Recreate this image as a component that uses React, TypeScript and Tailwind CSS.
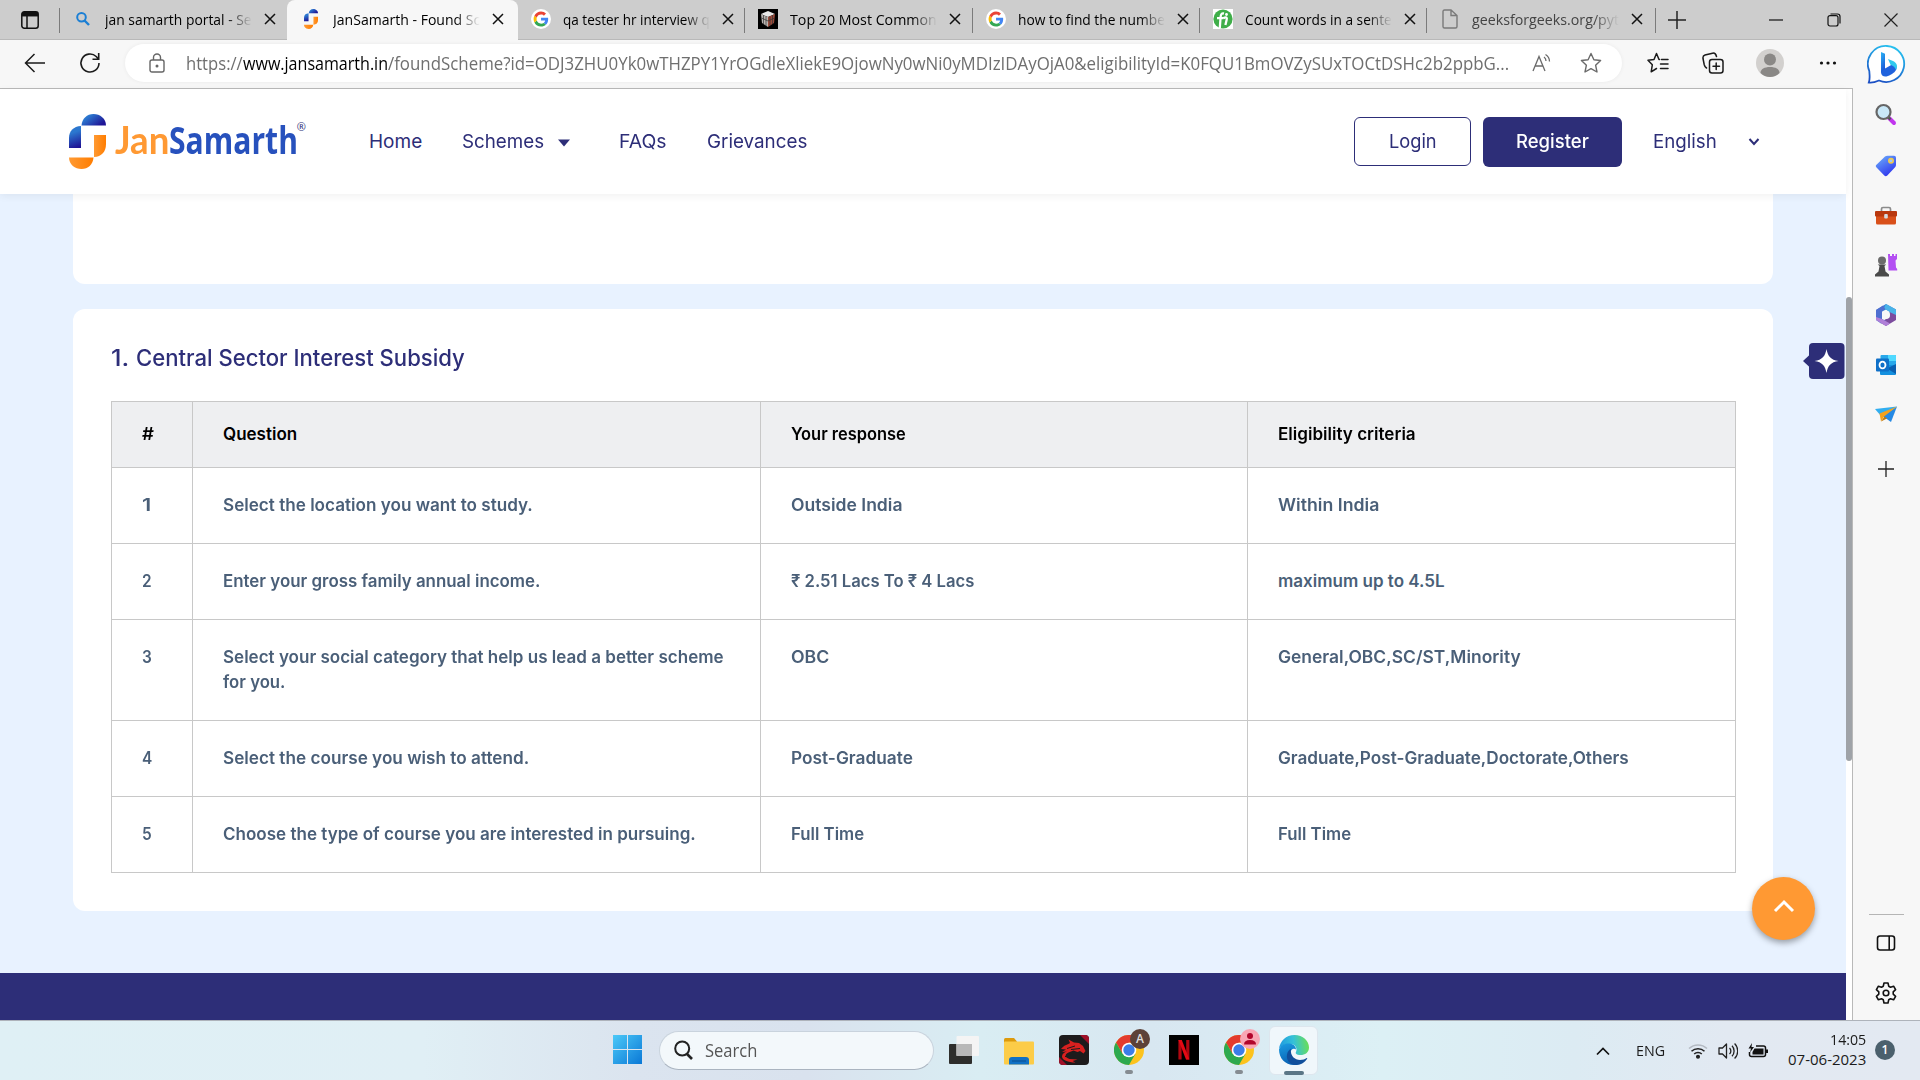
import React, { useLayoutEffect, useRef, useState } from "react";

/** Single line of text set to a given width. */
function Fit({ w, children, className = "" }: { w: number; children: React.ReactNode; className?: string }) {
  const ref = useRef<HTMLSpanElement>(null);
  const [scale, setScale] = useState(1);
  useLayoutEffect(() => {
    if (ref.current) setScale(w / ref.current.offsetWidth);
  }, [w]);
  return (
    <span className="block shrink-0 whitespace-nowrap" style={{ width: w }}>
      <span ref={ref} className={`inline-block origin-left whitespace-pre align-top ${className}`} style={{ transform: `scaleX(${scale})` }}>
        {children}
      </span>
    </span>
  );
}

function GoogleG() {
  return (
    <svg viewBox="0 0 20 20" className="h-5 w-5">
      <circle cx="10" cy="10" r="10" fill="#fff" />
      <g transform="translate(2.6 2.6) scale(0.62)">
        <path fill="#4285F4" d="M23.5 12.3c0-.9-.1-1.5-.2-2.2H12v4.3h6.6c-.1 1.1-.8 2.8-2.4 3.9l3.7 2.9c2.2-2.1 3.6-5.100 3.600-8.900z" />
        <path fill="#34A853" d="M12 24c3.200 0 6-1.100 7.900-2.900l-3.700-2.900c-1 .7-2.400 1.200-4.200 1.200-3.200 0-5.900-2.100-6.800-5l-3.900 3C3.200 21.300 7.300 24 12 24z" />
        <path fill="#FBBC05" d="M5.200 14.400c-.2-.8-.4-1.600-.4-2.400s.1-1.700.4-2.400l-3.900-3C.5 8.200 0 10 0 12s.5 3.800 1.300 5.400z" />
        <path fill="#EA4335" d="M12 4.700c2.200 0 3.700 1 4.600 1.800L20 3.200C17.900 1.200 15.200 0 12 0 7.300 0 3.200 2.700 1.300 6.600l3.900 3c1-2.900 3.600-4.900 6.800-4.900z" />
      </g>
    </svg>
  );
}

function JanMark({ className }: { className: string }) {
  return (
    <svg viewBox="0 0 37 55" className={className} preserveAspectRatio="none">
      <defs>
        <linearGradient id="jb1" x1="0" y1="0" x2="1" y2="0.6"><stop offset="0.3" stopColor="#2b77cf" /><stop offset="1" stopColor="#1f1596" /></linearGradient>
        <linearGradient id="jb2" x1="0.3" y1="0" x2="0.5" y2="1"><stop offset="0.3" stopColor="#2b77cf" /><stop offset="1" stopColor="#1f1596" /></linearGradient>
        <linearGradient id="jo1" x1="0" y1="0" x2="1" y2="0"><stop offset="0" stopColor="#ff9a33" /><stop offset="1" stopColor="#ff7d00" /></linearGradient>
      </defs>
      <path d="M12.500 11.500C13 4.500 18 0 24.500 0S37 4.500 37 11.500z" fill="url(#jb1)" />
      <path d="M12 12v22H0V24C0 17 4.500 12.500 12 12z" fill="url(#jb2)" />
      <path d="M25 21h12v9c0 8-4.500 12.500-12 13z" fill="url(#jo1)" />
      <path d="M0 43.500h24.500C24 50.500 19 55 12.500 55S0 50.500 0 43.500z" fill="url(#jo1)" />
    </svg>
  );
}

function SearchBlue() {
  return (
    <svg viewBox="0 0 20 20" className="h-5 w-5" fill="none" stroke="#1b7fd4" strokeWidth="2">
      <circle cx="8.500" cy="8.300" r="4.300" />
      <path d="M11.500 11.500l4.500 4.500" strokeWidth="2.400" />
    </svg>
  );
}

function CubeIcon() {
  return (
    <svg viewBox="0 0 20 20" className="h-5 w-5">
      <rect width="20" height="20" fill="#000" />
      <path d="M3 5l7-3 7 3-7 3z" fill="#e8e8e8" />
      <path d="M3 5l7 3v10l-6-4z" fill="#b9b4b0" />
      <path d="M17 5l-7 3v10l6-4z" fill="#9a4a3a" />
      <path d="M5.500 6v9M8 7v10M12 7.500v9M14.500 6v9M3.500 9l6.500 3 6.500-3" stroke="#333" strokeWidth="0.700" fill="none" />
    </svg>
  );
}

function GreenF() {
  return (
    <svg viewBox="0 0 20 20" className="h-5 w-5">
      <rect width="20" height="20" fill="#fff" />
      <circle cx="10" cy="10" r="9.600" fill="#3fae49" />
      <path d="M11 4.500C8.500 4 7.800 5.500 7.600 8L6.800 19M4 9.200h6.500M10.500 9.200C13 7.500 14.500 8.500 13.600 11l-1.200 5" stroke="#fff" strokeWidth="2.300" fill="none" />
      <circle cx="13.500" cy="5.500" r="1.400" fill="#fff" />
    </svg>
  );
}

function FileIcon() {
  return (
    <svg viewBox="0 0 20 20" className="h-5 w-5" fill="none" stroke="#7a7a7a" strokeWidth="1.400">
      <path d="M3 2.500Q3 1 4.500 1H11l6 5.500V17.500Q17 19 15.500 19h-11Q3 19 3 17.500zM11 1v5.500h6" />
    </svg>
  );
}

const tabs = [
  { t: "jan samarth portal - Se", icon: <SearchBlue /> },
  { t: "JanSamarth - Found Sc", icon: <JanMark className="ml-[3px] h-5 w-[14px]" />, active: true },
  { t: "qa tester hr interview q", icon: <GoogleG /> },
  { t: "Top 20 Most Common", icon: <CubeIcon /> },
  { t: "how to find the numbe", icon: <GoogleG /> },
  { t: "Count words in a sente", icon: <GreenF /> },
  { t: "geeksforgeeks.org/pyt", icon: <FileIcon />, dim: true },
];

function TabBar() {
  return (
    <div className="flex h-10 shrink-0 items-stretch border-b border-[#b9b9b9] bg-[#cdcdcd]">
      <div className="flex w-[60px] items-center justify-center">
        <svg viewBox="0 0 20 20" className="h-5 w-5" fill="none" stroke="#111" strokeWidth="1.500">
          <rect x="1.800" y="1.800" width="16.400" height="16.400" rx="2.500" />
          <path d="M2 4.200h16" strokeWidth="4.500" />
          <path d="M7 6v12" />
        </svg>
      </div>
      {tabs.map((tab, i) => (
        <div
          key={i}
          className={
            tab.active
              ? "relative z-10 -mb-px flex w-[230.500px] items-center rounded-t-lg bg-[#f7f7f7] pb-[2px] pl-[14px]"
              : "relative flex w-[227.400px] items-center pb-px pl-[13px]"
          }
        >
          {i !== 1 && i !== 2 && <span className="absolute -left-px top-2 h-[25px] w-px bg-[#7b7b7b]" />}
          <span className="flex h-5 w-5 shrink-0">{tab.icon}</span>
          <div className={`ml-3 font-['Open_Sans'] text-[15px] leading-5 [mask-image:linear-gradient(to_right,black_83%,transparent_100%)] ${tab.dim ? "text-[#444]" : "text-black"}`}>
            <Fit w={147}>{tab.t}</Fit>
          </div>
          <svg viewBox="0 0 12 12" className="ml-3 h-3 w-3 shrink-0" stroke="#111" strokeWidth="1.500"><path d="M1 1l10 10M11 1L1 11" /></svg>
        </div>
      ))}
      <div className="relative flex w-[44px] items-center justify-center">
        <span className="absolute left-0 top-2 h-[25px] w-px bg-[#7b7b7b]" />
        <svg viewBox="0 0 18 18" className="h-[18px] w-[18px]" stroke="#222" strokeWidth="1.500"><path d="M9 0v18M0 9h18" /></svg>
      </div>
      <div className="ml-auto flex w-[151px] items-center justify-between pr-[22px]">
        <svg viewBox="0 0 14 14" className="h-[14px] w-[14px]" stroke="#111" strokeWidth="1.200"><path d="M0 7h14" /></svg>
        <svg viewBox="0 0 14 14" className="h-[14px] w-[14px]" fill="none" stroke="#111" strokeWidth="1.200">
          <rect x="1" y="2.600" width="10" height="10.400" rx="2" /><path d="M3.500 1h7Q13 1 13 3.500v7" />
        </svg>
        <svg viewBox="0 0 14 14" className="h-[14px] w-[14px]" stroke="#222" strokeWidth="1.200"><path d="M.5.500l13 13M13.500.500l-13 13" /></svg>
      </div>
    </div>
  );
}

function Toolbar() {
  return (
    <div className="flex h-[49px] shrink-0 items-center border-b border-[#b9b9b9] bg-[#f7f7f7] pb-[2px]">
      <svg viewBox="0 0 22 20" className="ml-6 h-5 w-[22px]" fill="none" stroke="#1b1b1b" strokeWidth="1.500"><path d="M21 10H1.500M10.500 1L1.500 10l9 9" /></svg>
      <svg viewBox="0 0 22 22" className="ml-[33px] h-[22px] w-[22px]" fill="none" stroke="#1b1b1b" strokeWidth="1.600">
        <path d="M20 11a9 9 0 1 1-2.800-6.500L19.500 7M19.700 1v6.200h-6.200" />
      </svg>
      <div className="ml-[24px] flex h-[38px] w-[1497px] items-center rounded-full bg-white pl-[24px] shadow-[0_0_4px_rgba(0,0,0,0.06)]">
        <svg viewBox="0 0 16 20" className="h-5 w-4" fill="none" stroke="#666" strokeWidth="1.400">
          <rect x="1" y="7" width="14" height="12" rx="2" /><path d="M4.500 7V4.500a3.500 3.500 0 0 1 7 0V7" /><circle cx="8" cy="13" r="0.800" fill="#666" />
        </svg>
        <div className="ml-[21px] flex font-['Open_Sans'] text-[17.500px] leading-6 text-[#6f6f6f]">
          <Fit w={57}>https://</Fit>
          <Fit w={145} className="text-black">www.jansamarth.in</Fit>
          <Fit w={1121.500}>/foundScheme?id=ODJ3ZHU0Yk0wTHZPY1YrOGdleXliekE9OjowNy0wNi0yMDIzIDAyOjA0&amp;eligibilityId=K0FQU1BmOVZySUxTOCtDSHc2b2ppbG...</Fit>
        </div>
        <svg viewBox="0 0 20 20" className="ml-[22px] h-5 w-5" fill="none" stroke="#6a6a6a" strokeWidth="1.300">
          <path d="M1 18L7 3.500 13 18M3 13h8M12 4c1.500 1 2 2.500 2 4M13.500 1.500c2.500 1.500 4 4 4 7" />
        </svg>
        <svg viewBox="0 0 22 22" className="ml-[28px] h-[22px] w-[22px]" fill="none" stroke="#6a6a6a" strokeWidth="1.400" strokeLinejoin="round">
          <path d="M11 1.500l2.900 6.200 6.700.8-5 4.700 1.400 6.800-6-3.400-6 3.400 1.400-6.800-5-4.700 6.700-.8z" />
        </svg>
      </div>
      <svg viewBox="0 0 22 22" className="ml-[25px] h-[22px] w-[22px]" fill="none" stroke="#1b1b1b" strokeWidth="1.500" strokeLinejoin="round" strokeLinecap="round">
        <path d="M12.500 7.500h-.5L9.500 1.500 7 7.500l-6 .8 4.300 4.500-1.100 7 5.300-3.300M14.500 7.500H21M13.500 12H21M13.500 16.500H21" />
      </svg>
      <svg viewBox="0 0 22 22" className="ml-[33px] h-[22px] w-[22px]" fill="none" stroke="#1b1b1b" strokeWidth="1.500" strokeLinecap="round">
        <rect x="7.500" y="7.500" width="13.500" height="13.500" rx="2.500" /><path d="M14.200 11v6.500M11 14.200h6.500M4.500 16C2.800 15 2.600 14 2.200 12.500L1 6.500C.7 4.500 1.200 3.500 3 3L10.500 1.200C12.500.8 13.800 1.500 14.500 4.500" />
      </svg>
      <svg viewBox="0 0 28 28" className="ml-[32px] h-7 w-7">
        <circle cx="14" cy="14" r="14" fill="#d2d0ce" /><circle cx="14" cy="10.500" r="6" fill="#8a8886" /><path d="M4.500 24c0-4 4-6 9.500-6s9.500 2 9.500 6A14 14 0 0 1 14 28 14 14 0 0 1 4.500 24z" fill="#8a8886" />
      </svg>
      <svg viewBox="0 0 18 6" className="ml-[35px] h-[6px] w-[18px]" fill="#111"><circle cx="2.500" cy="3" r="1.600" /><circle cx="9" cy="3" r="1.600" /><circle cx="15.500" cy="3" r="1.600" /></svg>
    </div>
  );
}

function SiteHeader() {
  return (
    <header className="relative z-10 flex h-[105px] items-center bg-white pl-[69px] font-['Inter'] text-[19px] text-[#2d2e78] shadow-[0_2px_8px_rgba(0,0,0,0.06)]">
      <JanMark className="h-[55px] w-[37px]" />
      <div className="relative ml-[9px] flex h-[52px] items-center pb-[5px] font-['Open_Sans'] text-[38px] font-bold leading-none">
        <Fit w={54} className="font-['Lato'] text-[#ff9933]">Jan</Fit>
        <Fit w={129} className="text-[#2751bd]">Samarth</Fit>
        <span className="absolute -right-[8px] top-[5px] text-[11px] font-normal text-[#2d2e78]">®</span>
      </div>
      <nav className="ml-[71px] flex items-center pt-[2px]">
        <Fit w={53}>Home</Fit>
        <span className="w-10" />
        <Fit w={82}>Schemes</Fit>
        <svg viewBox="0 0 12 8" className="ml-[14px] mt-px h-2 w-3" fill="#2d2e78"><path d="M0 .5h12L6 7.500z" /></svg>
        <span className="w-[49px]" />
        <Fit w={48}>FAQs</Fit>
        <span className="w-10" />
        <Fit w={100}>Grievances</Fit>
      </nav>
      <div className="ml-auto flex items-center">
        <div className="flex h-[49px] w-[117px] items-center justify-center rounded-md border border-[#2d2e78] pt-[2px]"><Fit w={48}>Login</Fit></div>
        <div className="ml-3 flex h-[50px] w-[139px] items-center justify-center rounded-md bg-[#2d2e78] pt-[2px] font-medium text-white"><Fit w={73}>Register</Fit></div>
        <div className="ml-[31px] pt-[2px]"><Fit w={64}>English</Fit></div>
        <svg viewBox="0 0 12 12" className="ml-[31px] mr-[86px] h-3 w-3" fill="none" stroke="#2d2e78" strokeWidth="2"><path d="M1.500 3L6 8l4.500-5" /></svg>
      </div>
    </header>
  );
}

type Cell = [string, number];
const head: Cell[] = [["#", 12], ["Question", 74], ["Your response", 115], ["Eligibility criteria", 137.5]];
const rows: { n: Cell; q: Cell[]; r: Cell; e: Cell }[] = [
  { n: ["1", 9], q: [["Select the location you want to study.", 310]], r: ["Outside India", 111.5], e: ["Within India", 101] },
  { n: ["2", 10], q: [["Enter your gross family annual income.", 317]], r: ["₹ 2.51 Lacs To ₹ 4 Lacs", 183], e: ["maximum up to 4.5L", 167] },
  { n: ["3", 10], q: [["Select your social category that help us lead a better scheme", 501], ["for you.", 62]], r: ["OBC", 38.5], e: ["General,OBC,SC/ST,Minority", 243] },
  { n: ["4", 10], q: [["Select the course you wish to attend.", 306]], r: ["Post-Graduate", 122], e: ["Graduate,Post-Graduate,Doctorate,Others", 351] },
  { n: ["5", 10], q: [["Choose the type of course you are interested in pursuing.", 473]], r: ["Full Time", 73], e: ["Full Time", 73] },
];

function EligibilityTable() {
  const cell = "border border-[#c8c8c8] pl-[30px] align-top";
  return (
    <table className="mt-[29px] w-[1625px] table-fixed border-collapse font-['Inter'] text-[17px] font-[560] leading-[25px] text-[#4a5f78]">
      <colgroup>
        <col className="w-[81px]" /><col className="w-[568px]" /><col className="w-[487px]" /><col />
      </colgroup>
      <thead>
        <tr className="h-[66px] bg-[#eeeff1] text-black">
          {head.map(([t, w]) => (
            <th key={t} className={`${cell} pt-5 text-left font-[560]`}><Fit w={w}>{t}</Fit></th>
          ))}
        </tr>
      </thead>
      <tbody>
        {rows.map((row) => (
          <tr key={row.n[0]} className={row.q.length > 1 ? "h-[101px]" : "h-[76px]"}>
            <td className={`${cell} pt-[25px]`}><Fit w={row.n[1]}>{row.n[0]}</Fit></td>
            <td className={`${cell} pt-[25px]`}>{row.q.map(([t, w]) => <Fit key={t} w={w}>{t}</Fit>)}</td>
            <td className={`${cell} pt-[25px]`}><Fit w={row.r[1]}>{row.r[0]}</Fit></td>
            <td className={`${cell} pt-[25px]`}><Fit w={row.e[1]}>{row.e[0]}</Fit></td>
          </tr>
        ))}
      </tbody>
    </table>
  );
}

function Page() {
  return (
    <div className="flex min-h-0 flex-1 border-r border-[#b9b9b9] bg-white">
      <div className="relative flex w-[1846px] flex-col bg-[#e8f2ff]">
        <SiteHeader />
        <main className="flex flex-col pl-[73px]">
          <section className="h-[90px] w-[1700px] rounded-b-xl bg-white" />
          <section className="mt-[25px] h-[602px] w-[1700px] rounded-xl bg-white pl-[38px] pt-[35px]">
            <h2 className="flex gap-[7px] font-['Inter'] text-[22.500px] font-medium leading-7 text-[#2d2e78]">
              <Fit w={18}>1.</Fit>
              <Fit w={329}>Central Sector Interest Subsidy</Fit>
            </h2>
            <EligibilityTable />
          </section>
        </main>
        <footer className="mt-auto h-[47px] bg-[#2d2e78]" />
        <svg viewBox="0 0 42 36" className="absolute left-[1803px] top-[254px] h-9 w-[42px]">
          <rect x="6" y="0" width="35.500" height="36" rx="4" fill="#2d2e78" /><path d="M0 18l7-6.500v13z" fill="#2d2e78" />
          <path d="M23.500 6c1.300 7.500 4.200 10.700 12 12-7.800 1.300-10.700 4.500-12 12-1.300-7.500-4.200-10.700-12-12 7.800-1.300 10.700-4.500 12-12z" fill="#fff" />
        </svg>
        <button className="absolute left-[1752px] top-[788px] flex h-[63px] w-[63px] items-center justify-center rounded-full bg-[#ff9933] shadow-[0_3px_6px_rgba(0,0,0,0.35)]">
          <svg viewBox="0 0 22 14" className="mb-[6px] h-[14px] w-[22px]" fill="none" stroke="#fff" strokeWidth="3"><path d="M2 12l9-9 9 9" /></svg>
        </button>
      </div>
      <div className="w-[6px] bg-white pt-[208px]"><div className="h-[464px] rounded-full bg-[#9fa3a8]" /></div>
    </div>
  );
}

function Sidebar() {
  return (
    <aside className="flex w-[67px] shrink-0 flex-col items-center bg-[#f7f7f7] pr-px pt-[4px]">
      <svg viewBox="0 0 40 40" className="ml-[2px] h-10 w-10">
        <defs>
          <linearGradient id="bo" x1="0.700" y1="0" x2="0.300" y2="1"><stop offset="0" stopColor="#28c3f0" /><stop offset="1" stopColor="#1b4fc4" /></linearGradient>
          <linearGradient id="bb" x1="0" y1="0" x2="0.300" y2="1"><stop offset="0" stopColor="#2ab5f5" /><stop offset="1" stopColor="#1a55d8" /></linearGradient>
        </defs>
        <path d="M20 2a18 18 0 1 1-8 34.500C8.500 38 5 39 1.800 38.500 3.300 35 2.500 31 2.300 27A18 18 0 0 1 20 2z" fill="#fff" stroke="url(#bo)" strokeWidth="1.800" />
        <path d="M14 8l4 1.800v16L14 29z" fill="url(#bb)" /><path d="M14 28l4-3.500 8-4.500c3.500 1 4 3 3 6-1.500 3-6 5.500-9.500 6.500-3 .5-5.500-1-5.500-4.500z" fill="#1f62dd" /><path d="M21 15l5 2c4 1.700 5 5.500 3 9-1-3-2.500-4-5.500-5.300z" fill="#30c8ee" />
      </svg>
      <svg viewBox="0 0 24 24" className="mt-[19px] h-6 w-6">
        <path d="M15 15l5 5" stroke="#c135ee" strokeWidth="4" strokeLinecap="round" /><path d="M14 14l2.500 2.500" stroke="#555" strokeWidth="2.500" /><circle cx="9.500" cy="9" r="7" fill="#c9e8f8" stroke="#666" strokeWidth="2.200" />
      </svg>
      <svg viewBox="0 0 24 24" className="mt-[27px] h-6 w-6">
        <defs><linearGradient id="tg" x1="0" y1="0" x2="0.600" y2="1"><stop offset="0" stopColor="#6fb4fb" /><stop offset="1" stopColor="#3038ee" /></linearGradient></defs>
        <path d="M2.200 11L11 2.500Q12 1.800 13.500 1.800H20Q22 1.800 22 3.800v7Q22 12 21.300 13l-8 8.500q-1.600 1.400-3 0l-8-8.200q-1.200-1.200-.1-2.300z" fill="url(#tg)" /><circle cx="17" cy="6.800" r="2.200" fill="#9cc8ff" stroke="#f2c94a" strokeWidth="1.600" />
      </svg>
      <svg viewBox="0 0 24 24" className="mt-[26px] h-6 w-6">
        <path d="M7.500 7V5Q7.500 3.500 9 3.500h6Q16.500 3.500 16.500 5v2" fill="none" stroke="#8b8b8b" strokeWidth="1.700" /><rect x="2" y="10" width="20" height="10.500" rx="1.500" fill="#d9501a" /><rect x="1" y="7" width="22" height="5.500" rx="1" fill="#b9380e" /><rect x="10.200" y="10" width="3.600" height="4.500" rx="1" fill="#d5dbe0" />
      </svg>
      <svg viewBox="0 0 24 24" className="mt-[25px] h-6 w-6">
        <path d="M14 1h2v2h2V1h2v2h1.500V1H23v5l-1.500 1.500.5 7 1.200 1.500v1.500H14.500z" fill="#b34ff2" /><circle cx="8" cy="7.500" r="4" fill="#6b6b6b" /><path d="M3.800 11.500h8.400L10.500 13l1 5.500 3.500 3V23.500H1v-2l3.500-3 1-5.500z" fill="#4a4a4a" />
      </svg>
      <svg viewBox="0 0 24 24" className="mt-[26px] h-6 w-6">
        <path d="M12 1l10 5.500v6l-6.500-4L12 6.500 8 8.500v7.500L2 16V7z" fill="#3a7fd5" /><path d="M12 1l10 5.500V15l-6.500-1V9L10 5z" fill="#49b3e8" /><path d="M22 12v5l-10 6-6-3.500 9.500-5.500V9z" fill="#7c4c9e" /><path d="M2 7l7-4.500 2 3-3 3V16l4 2-5 2.500-5-3.500z" fill="#4f6fd0" /><path d="M2 14v3l10 6 4-2.500-8-4.500z" fill="#b07fd8" /><circle cx="12" cy="12" r="4" fill="#f7f7f7" />
      </svg>
      <svg viewBox="0 0 24 24" className="mt-[26px] h-6 w-6">
        <rect x="6.500" y="2" width="15.500" height="13" rx="1" fill="#28a8ea" /><path d="M14 2h7q1 0 1 1v5h-8z" fill="#50d9ff" /><path d="M6 12h16v9q0 1-1 1H7q-1 0-1-1z" fill="#1490df" /><path d="M22 11v10l-9-5.500z" fill="#0a5fb0" /><rect x="2" y="5.500" width="13" height="13" rx="1" fill="#0f70c8" /><ellipse cx="8.500" cy="12" rx="3" ry="3.400" fill="none" stroke="#fff" strokeWidth="1.800" />
      </svg>
      <svg viewBox="0 0 24 24" className="mt-[26px] h-6 w-6">
        <path d="M1 6l22-2.500L7 13z" fill="#31aef0" /><path d="M23 3.500L17 19l-8.500-6z" fill="#2589e4" /><path d="M23 3.500L5.500 10.500 7 18.500l3-5z" fill="#f5a11c" /><path d="M7 18.500l3.500-5 2.500 2z" fill="#c07a10" />
      </svg>
      <svg viewBox="0 0 16 16" className="mt-[34px] h-4 w-4" stroke="#222" strokeWidth="1.300"><path d="M8 0v16M0 8h16" /></svg>
      <div className="mt-auto h-px w-[35px] bg-[#b5b5b5]" />
      <svg viewBox="0 0 20 20" className="mt-[18px] h-5 w-5" fill="none" stroke="#111" strokeWidth="1.600"><rect x="1.500" y="3" width="17" height="14" rx="2.500" /><path d="M13.200 3v14" /></svg>
      <svg viewBox="0 0 24 24" className="mb-[15px] mt-[28px] h-6 w-6" fill="none" stroke="#111" strokeWidth="1.600" strokeLinejoin="round">
        <path d="M10 2h4l.7 3.200 1.800 1 3.100-1 2 3.500-2.400 2.200v2.200l2.400 2.200-2 3.500-3.100-1-1.800 1L14 22h-4l-.7-3.200-1.800-1-3.100 1-2-3.500 2.400-2.200v-2.200L2.400 8.700l2-3.500 3.100 1 1.800-1z" /><circle cx="12" cy="12" r="2.800" />
      </svg>
    </aside>
  );
}

function Chrome() {
  return (
    <svg viewBox="0 0 30 30" className="h-[30px] w-[30px]">
      <circle cx="15" cy="15" r="15" fill="#fcc31e" />
      <path d="M2 7.500A15 15 0 0 1 28 7.500H15L8.500 18.700z" fill="#e33b2e" />
      <path d="M2 7.500A15 15 0 0 0 15 30l6.500-11.200L8.500 18.700z" fill="#2da94f" />
      <circle cx="15" cy="15" r="7.300" fill="#fff" /><circle cx="15" cy="15" r="5.700" fill="#3b7de9" />
    </svg>
  );
}

function Taskbar() {
  return (
    <div className="flex h-[60px] shrink-0 items-center border-t border-[#aeb3bb] bg-[linear-gradient(90deg,#dff0f5_0%,#e0eff5_22%,#dbe4ef_33%,#d9e2ee_42%,#d9edf3_51%,#d8e7f1_60%,#dcf0f5_72%,#dcebf3_82%,#e2e9f2_90%,#e3e9f2_100%)] pl-[612.500px] font-['Open_Sans'] text-[#1b1b1b]">
      <svg viewBox="0 0 30 30" className="-mt-px h-[30px] w-[30px]">
        <defs><linearGradient id="wn" x1="0" y1="0" x2="1" y2="1"><stop offset="0" stopColor="#4cc9f8" /><stop offset="1" stopColor="#0a78d6" /></linearGradient></defs>
        <path d="M0 0h14v14H0zM15 0H29v14H15zM0 15h14v14H0zM15 15H29v14H15z" fill="url(#wn)" />
      </svg>
      <div className="-mt-px ml-[16.500px] flex h-[39px] w-[275px] items-center rounded-full border border-[#c9d3dd] border-b-[#aab4c0] bg-[#f3f8fb] pl-[13px] text-[17.500px] text-[#555]">
        <svg viewBox="0 0 20 20" className="h-5 w-5" fill="none" stroke="#222" strokeWidth="2"><circle cx="9.200" cy="8.500" r="7" /><path d="M14 14l5 5" strokeWidth="2.600" /></svg>
        <span className="w-3" />
        <Fit w={52}>Search</Fit>
      </div>
      <svg viewBox="0 0 30 30" className="-mt-px ml-[15px] h-[30px] w-[30px]"><rect x="0" y="9" width="23" height="20" rx="1" fill="#2e2e2c" /><rect x="7.500" y="1" width="22.500" height="20" rx="1" fill="#f4f4f4" /><path d="M7.500 9H23v12H7.500z" fill="#b8b8b8" /></svg>
      <svg viewBox="0 0 30 30" className="ml-[25px] h-[30px] w-[30px]"><path d="M0 3.500Q0 2 1.500 2H10l3 3.500H13V9H0z" fill="#dd9a0c" /><rect y="5.500" width="30" height="23" rx="1" fill="#fccc48" /><path d="M5 28.500V24q0-3 3-3h14q3 0 3 3v4.500z" fill="#1070c4" /><path d="M8 25h14" stroke="#0a4d8c" /></svg>
      <svg viewBox="0 0 30 30" className="-mt-px ml-[25px] h-[30px] w-[30px]">
        <rect width="30" height="30" rx="4" fill="#1d1b1c" /><path d="M21 0h5q4 0 4 4v5zM0 22v4q0 4 4 4h4z" fill="#a01028" />
        <path d="M2 14c3-4 6-4 9-6L9.500 4.500 15 7.500l5 .5 4 3 2.500 5-2 2.500-3.500-2.500-2.500 1-4-1.500-5 2c-4 2-4 4.500 1 6.500l8 .5-5 1.500 3 1.500C9 27.500 3 25 3 21.500 3 19 5 17.500 8 16.500l-5 .5 4-2.500z" fill="#d8201f" />
        <path d="M8 13.500l8-2.500M12 14.500l9-1M6 21.500l10 .5" stroke="#1d1b1c" strokeWidth="1" />
      </svg>
      <div className="relative -mt-px ml-[25px] h-[30px] w-[30px]">
        <Chrome />
        <span className="absolute left-4 -top-[6px] flex h-5 w-5 items-center justify-center rounded-full bg-[#5d4138] text-[12px] font-semibold text-[#ddd]">A</span>
        <span className="absolute left-[11px] top-[35px] h-1 w-2 rounded-full bg-[#858c92]" />
      </div>
      <svg viewBox="0 0 30 30" className="-mt-px ml-[25px] h-[30px] w-[30px]"><rect width="30" height="30" /><path d="M11 5v19.500M18.800 5v19.500" stroke="#b00610" strokeWidth="3.200" /><path d="M9.400 5h3.400l7.600 19.500H17z" fill="#e50914" /></svg>
      <div className="relative -mt-px ml-[25px] h-[30px] w-[30px]">
        <Chrome />
        <svg viewBox="0 0 20 20" className="absolute left-4 -top-[6px] h-5 w-5"><circle cx="10" cy="10" r="10" fill="#f9a6b4" /><circle cx="10" cy="7" r="3" fill="#b1052b" /><path d="M4 15.500q0-4.500 6-4.500t6 4.500z" fill="#b1052b" /></svg>
        <span className="absolute left-[11px] top-[35px] h-1 w-2 rounded-full bg-[#858c92]" />
      </div>
      <div className="relative -mt-px ml-[15px] flex h-[49px] w-[49px] items-center justify-center rounded-md border border-[#dde6ee] bg-[#f0f7fb]">
        <svg viewBox="0 0 30 30" className="h-[30px] w-[30px]">
          <defs>
            <linearGradient id="e1" x1="0" y1="0.500" x2="1" y2="0.400"><stop offset="0" stopColor="#1f9ae0" /><stop offset="0.500" stopColor="#35c1d8" /><stop offset="1" stopColor="#6bdf52" /></linearGradient>
            <linearGradient id="e2" x1="0" y1="0" x2="0.300" y2="1"><stop offset="0" stopColor="#1b9de2" /><stop offset="1" stopColor="#0a63b5" /></linearGradient>
          </defs>
          <path d="M0 14C1 6 7 0 15.500 0 24 0 30 6 30 12.500c0 5-4 7.500-8.500 7.500-4 0-5.500-1.500-4.500-3 1.500-3 0-8-6-8C5.500 9 1.500 11 0 14z" fill="url(#e1)" />
          <path d="M0 14.500C1.500 10 6 8 10.500 8.500c4 .5 6.500 3 6.500 6-2-2-6 0-6 4.500 0 5 4.500 10 10 10-2.500 1-4 1-6 1C6 30 0 23 0 14.500z" fill="url(#e2)" />
          <path d="M12 14c-1 7 4 11 9 11 3 0 5-1 6.800-2 .5 0 .5.500.2 1-2 3-6 6-11 6-7 0-10-6-9-10.500.5-3 2-4.500 4-5.500z" fill="#114f9c" />
        </svg>
        <span className="absolute left-[14px] top-[44px] h-1 w-5 rounded-full bg-[#5b7686]" />
      </div>
      <div className="ml-auto flex items-center pr-[25px]">
        <svg viewBox="0 0 14 10" className="h-[10px] w-[14px]" fill="none" stroke="#111" strokeWidth="1.700"><path d="M1 8.500l6-6 6 6" /></svg>
        <span className="w-[26px]" />
        <span className="-mt-px flex text-[15px]"><Fit w={29.500}>ENG</Fit></span>
        <svg viewBox="0 0 20 16" className="ml-[22.500px] h-4 w-5" fill="none" stroke="#222" strokeWidth="1.500">
          <path d="M1 5.500a13 13 0 0 1 18 0" stroke="#b4bac2" /><path d="M3.500 8.300a9.300 9.300 0 0 1 13 0M6.200 11a5.500 5.500 0 0 1 7.600 0" /><circle cx="10" cy="13.700" r="1.300" fill="#222" />
        </svg>
        <svg viewBox="0 0 20 18" className="ml-[10px] h-[18px] w-5" fill="none" stroke="#222" strokeWidth="1.300" strokeLinejoin="round">
          <path d="M1 6h3.500l4-4v14l-4-4H1zM11.500 6a4 4 0 0 1 0 6M14 3.800a7.500 7.500 0 0 1 0 10.400M16.600 1.500a10.500 10.500 0 0 1 0 15" />
        </svg>
        <svg viewBox="0 0 20 16" className="ml-[10px] h-4 w-5" fill="none" stroke="#111" strokeWidth="1.500">
          <path d="M8 3h7.500q2 0 2 2v6.500q0 2-2 2h-12q-2 0-2-2V9" /><path d="M6.500 5.500h9V11.500h-11V9z" fill="#111" stroke="none" /><rect x="18" y="6.500" width="2" height="3.500" fill="#111" stroke="none" /><path d="M4 0L.5 5.500H3L2 9.500 6 4H3.500z" fill="#111" stroke="none" />
        </svg>
        <div className="-mt-1 ml-[20px] flex flex-col items-end text-[15px] leading-5">
          <Fit w={36}>14:05</Fit>
          <Fit w={78}>07-06-2023</Fit>
        </div>
        <span className="-mt-px ml-[9px] flex h-5 w-5 items-center justify-center rounded-full bg-[#4b606d] text-[12px] font-semibold text-white">1</span>
      </div>
    </div>
  );
}

export default function App() {
  return (
    <div className="flex h-[1080px] w-[1920px] flex-col overflow-hidden bg-[#f7f7f7]">
      <TabBar />
      <div className="flex min-h-0 flex-1">
        <div className="flex w-[1853px] shrink-0 flex-col">
          <Toolbar />
          <Page />
        </div>
        <Sidebar />
      </div>
      <Taskbar />
    </div>
  );
}
